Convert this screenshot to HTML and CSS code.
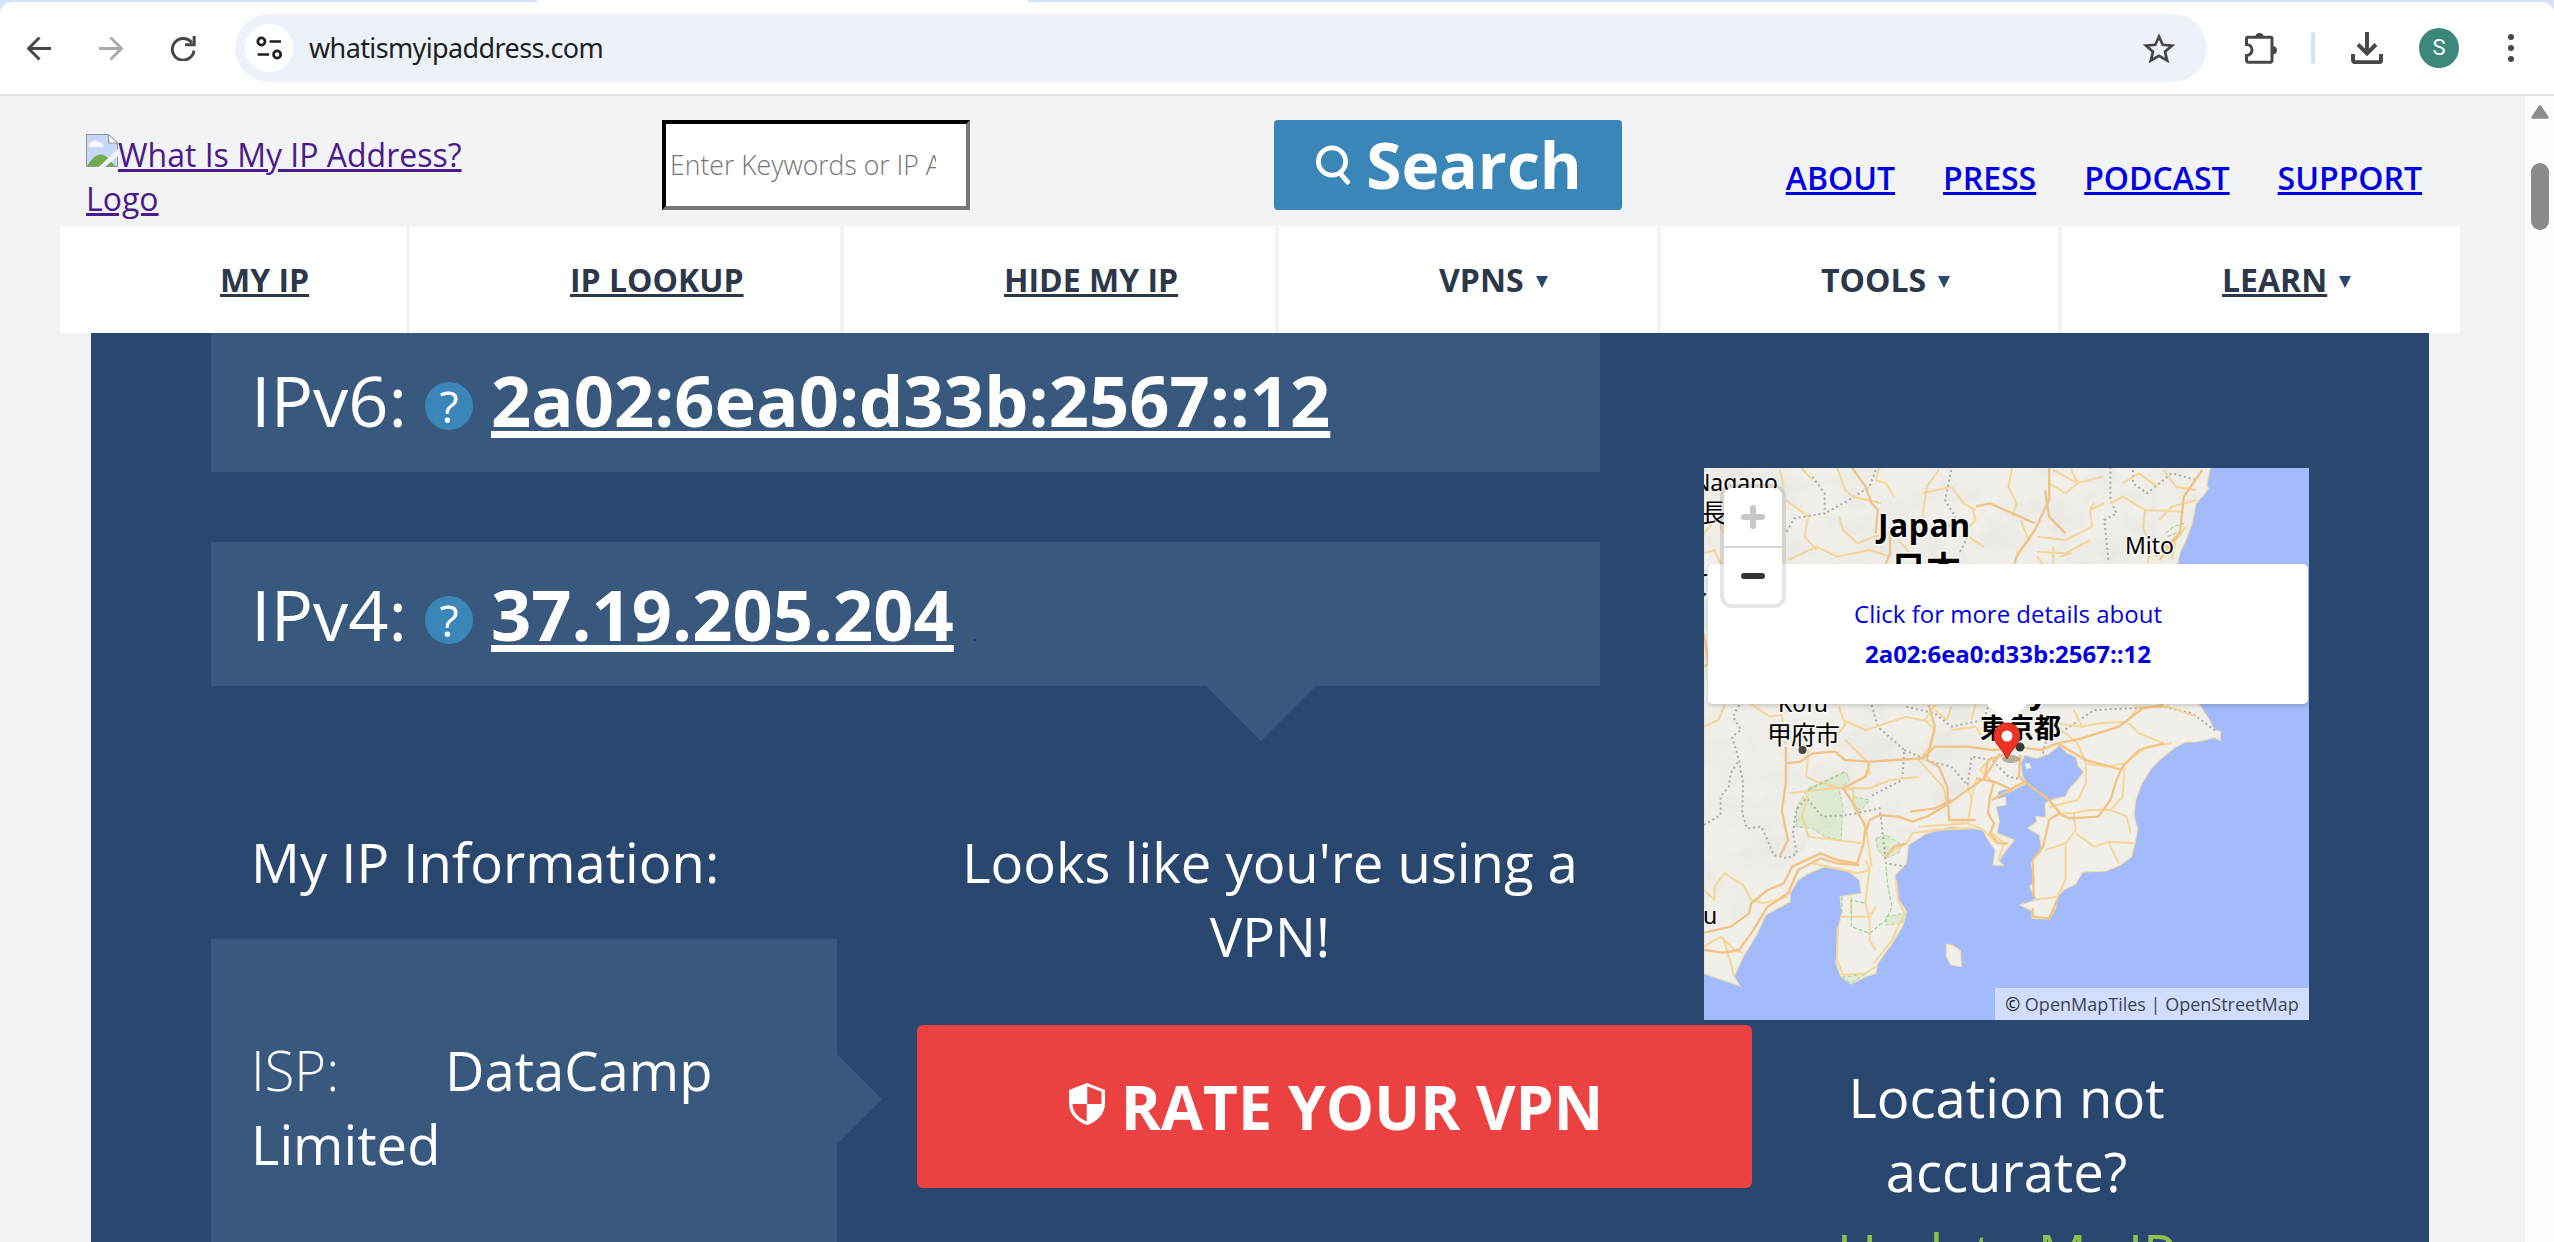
FILE: index.html
```html
<!DOCTYPE html>
<html lang="en">
<head>
<meta charset="utf-8">
<title>What Is My IP Address</title>
<link rel="stylesheet" href="styles.css">
</head>
<body>
<div class="tabstrip">
<div class="toolbar">
  <div class="tab-foot"></div>
  <svg class="ic back" viewBox="0 0 24 24"><path d="M23 12H2M12 1.500 1.500 12 12 22.500" fill="none" stroke="#474747" stroke-width="2.800"/></svg>
  <svg class="ic fwd" viewBox="0 0 24 24"><path d="M1 12h21M12 1.500 22.500 12 12 22.500" fill="none" stroke="#a9a9a9" stroke-width="2.800"/></svg>
  <svg class="ic reload" viewBox="0 0 24 24"><path d="M20.500 6.500A10.400 10.400 0 1 0 22.500 14M22.700 0v8.500H14" fill="none" stroke="#474747" stroke-width="2.900"/></svg>
  <div class="omnibox">
    <div class="site-info"><svg viewBox="0 0 24 24" width="26" height="26"><g fill="none" stroke="#1f1f1f" stroke-width="2.500"><circle cx="5" cy="6" r="3.300"/><circle cx="19.500" cy="18" r="3.300"/><path d="M12.500 6H23M1.500 18H12"/></g></svg></div>
    <span class="url">whatismyipaddress.com</span>
    <svg class="star" viewBox="0 0 32 30"><path d="M16 3.500 19.700 11.800 29 12.600 22 18.700 24.200 27.500 16 22.800 7.800 27.500 10 18.700 3 12.600 12.300 11.800Z" fill="none" stroke="#474747" stroke-width="2.700"/></svg>
  </div>
  <svg class="puzzle" viewBox="0 0 32 32"><path d="M3.500 5.300H25.500a1.500 1.500 0 0 1 1.500 1.500V28.700a1.500 1.500 0 0 1-1.500 1.500H3a1.500 1.500 0 0 1-1.500-1.500V23.500a5.500 5.500 0 0 0 0-11V6.800a1.500 1.500 0 0 1 1.500-1.500Z" fill="none" stroke="#474747" stroke-width="3"/><path d="M10.500 5a4 4 0 0 1 8 0ZM28 14.300a4 4 0 0 1 0 8Z" fill="#474747"/></svg>
  <div class="split"></div>
  <svg class="download" viewBox="0 0 32 32"><path d="M16 0V20M7 12.500l9 9 9-9M2 22v6.500a1.700 1.700 0 0 0 1.700 1.700H28.300a1.700 1.700 0 0 0 1.700-1.700V22" fill="none" stroke="#474747" stroke-width="3.900"/></svg>
  <div class="avatar">S</div>
  <svg class="dots" viewBox="0 0 6 28"><g fill="#474747"><circle cx="3" cy="3" r="3"/><circle cx="3" cy="14" r="3"/><circle cx="3" cy="25" r="3"/></g></svg>
</div>
</div>

<div class="viewport">
<div class="page">
  <header class="header">
    <a class="logo" href="#"><svg class="broken" viewBox="0 0 32 33"><path d="M.5.500H22.500L31.500 9V32.500H.5Z" fill="#c6d8f5" stroke="#8f9394"/><path d="M22.500.500V9h9Z" fill="#fff" stroke="#8f9394"/><path d="M4 13a2.800 2.800 0 0 1 2-5 4 4 0 0 1 7 1 2.500 2.500 0 0 1 3 4Z" fill="#fff"/><path d="M1 32C5 26 10 20 15 20.500S25 27 29 32Z" fill="#6fab4b"/><path d="M32 15V22L19 33H12.500Z" fill="#f1f3f5"/></svg>What Is My IP Address? Logo</a>
    <input class="query" type="text" placeholder="Enter Keywords or IP Address">
    <button class="search"><svg viewBox="0 0 34 40" width="34" height="40"><circle cx="16" cy="16.500" r="13.600" fill="none" stroke="#fff" stroke-width="4.800"/><path d="M24 28 31.500 37" stroke="#fff" stroke-width="5" stroke-linecap="round"/></svg>Search</button>
    <nav class="links"><a href="#">ABOUT</a><a href="#">PRESS</a><a href="#">PODCAST</a><a href="#">SUPPORT</a></nav>
  </header>
  <nav class="menu">
    <div><a href="#">MY IP</a></div>
    <div><a href="#">IP LOOKUP</a></div>
    <div><a href="#">HIDE MY IP</a></div>
    <div><span>VPNS</span><i></i></div>
    <div><span>TOOLS</span><i></i></div>
    <div><a href="#">LEARN</a><i></i></div>
  </nav>
  <main class="main">
    <section class="left">
      <div class="ip v6"><span class="lbl">IPv6:</span><b class="q">?</b><a href="#">2a02:6ea0:d33b:2567::12</a></div>
      <div class="ip v4"><span class="lbl">IPv4:</span><b class="q">?</b><a href="#">37.19.205.204</a><i class="speck"></i></div>
      <div class="row">
        <div class="info">
          <p class="info-title">My IP Information:</p>
          <div class="isp"><span class="key">ISP:</span>DataCamp Limited</div>
        </div>
        <div class="vpn">
          <p>Looks like you're using a VPN!</p>
          <a class="rate"><svg viewBox="0 0 36 42" width="36" height="42"><path d="M18 0 36 7V20C36 31 28 39 18 42 8 39 0 31 0 20V7Z" fill="#fff"/><path d="M18.300 3.300 32.500 8.700V21H18.300ZM17.700 21V38.500C9.500 35 3.800 29 3.500 21Z" fill="#eb4141"/></svg>RATE YOUR VPN</a>
        </div>
      </div>
    </section>
    <section class="right">
      <div class="map">
        <svg class="tiles" viewBox="0 0 605 552" width="605" height="552">
          <defs>
            <filter id="relief" x="0" y="0" width="100%" height="100%"><feTurbulence type="fractalNoise" baseFrequency=".022 .03" numOctaves="3" seed="8"/><feColorMatrix values="0 0 0 0 .55  0 0 0 0 .55  0 0 0 0 .52  .8 0 0 0 -.32"/></filter>
            <clipPath id="inland"><path d="M0 0H500L490 100 300 270 215 385 165 360 120 360 80 400 0 500Z"/></clipPath>
          </defs>
          <rect width="605" height="552" fill="#a3bbfa"/>
          <g transform="translate(-14 232) scale(.408163 .333333)" class="geo">
            <path class="land" d="M34-700H1275L1266-645 1270-635 1255-610 1240-590 1230-530 1215-480 1200-440 1190-380 1195-200 1220-60 1247 12 1270 55 1285 90 1300 95 1299 122 1286 112 1240 126 1215 125 1185 145 1150 180 1130 205 1105 255 1092 300 1088 340 1092 370 1097 385 1090 430 1082 470 1055 495 1020 513 962 516 945 552 915 570 900 590 895 625 880 657 838 655 838 632 808 615 850 600 832 560 845 545 836 490 862 450 856 405 828 385 850 365 848 350 872 352 870 310 890 298 920 290 930 265 950 240 965 215 952 200 945 170 925 160 905 135 878 162 850 175 820 165 810 190 815 230 825 250 800 265 772 280 774 315 750 320 758 365 752 400 795 420 772 455 757 482 768 496 742 495 748 450 728 415 718 390 690 385 640 380 580 400 535 435 530 490 503 525 504 560 512 600 530 635 522 675 495 730 460 790 455 820 430 830 395 852 370 830 358 790 364 680 372 640 368 590 420 580 415 540 385 510 330 500 290 520 265 540 245 580 245 605 185 645 165 700 130 770 108 830 122 858 34 820Z"/>
            <path class="land" d="M628 732 645 737 662 752 665 800 640 795 628 770Z"/>
            <path d="M755 275l20-8 2 20-22 10Z" fill="#a3bbfa"/>
            <path d="M820 190l12 0 4 14-12 4Z" fill="#f0efea"/>
            <path class="park" d="M290 265 380 215 392 240 365 270 375 320 370 420 330 410 300 385 260 380 262 320ZM455 415 480 405 520 435 510 460 480 475 460 450ZM400 290 440 300 420 330 402 320ZM480 650 525 640 520 670 480 675ZM372 832 430 822 395 850Z"/>
            <g class="border">
              <path d="M120 15 105 50 125 90 103 110 120 180 130 250 128 340 140 385 175 380 190 420 205 465 240 475 262 460 252 400 260 330 285 295 325 350 385 345 465 325 472 400 480 490 530 500M34 375 75 345 75 290 95 260 100 220 120 180M445 15 460 80 525 150 520 240 440 290M525 150 590 185 640 200 680 255 690 170 740 180 780 230 820 240M530 20 600 40 640 80 720 60 730 20M865 160 870 130 990 30 1160 20 1230 40 1290 95M300-670 330-620 330-560 255-545 235-500M455-690 440-640 390-600 330-560M640-690 625-600 650-550 625-500M1030-700 1030-600 1045-560 1015-540 1025-420M1085-690 1085-650 1120-620 1180-680 1240-660M680-490 660-440"/>
            </g>
            <g class="minor">
              <path d="M34 80 70 60 85 15M150 12 195 50 225 45 235 135M60 600 60 560 85 520 130 555 150 600 180 610 240 590M34 570 60 600M34 740 75 710 110 750 130 760M80 710 100 790 108 830M245 280 350 265 440 265 490 240 560 230M290 150 285 230 310 245 370 265 400 270 400 320 430 375 445 500M290 280 275 350 290 410 360 420 420 430M380 120 435 185 440 220 375 265M365 20 380 75 350 120M375 60 430 90 530 50 585 65M600 15 575 60 600 90 590 140 560 180 590 220 620 260 630 310M680 255 690 300 680 370 640 370M560 380 680 370 720 390 750 430M640 90 700 80 720 120 780 110M860 70 900 80 950 130 970 190 970 250 950 300 880 320M900 70 960 80 1000 70 1070 65 1100 20M1075 70 1100 100 1160 130M970 190 1020 200 1065 190 1120 140 1180 130M1065 200 1060 290 1030 330 975 330 940 340 905 340M940 340 945 390 920 430 870 450M945 400 990 440 1025 425 1090 430M1025 425 1050 490M920 435 920 540 900 590 840 600M1030 330 1070 350 1080 400M745 250 710 210 740 170M700 240 690 300M740 400 770 430 755 480M430 480 440 510 410 520 300 490M440 500 430 610 440 660 440 720 455 750M370 650 440 650 455 620M395 590 395 640M505 540 510 600 525 640 495 720 450 790M362 680 360 780 375 825 430 820 455 800M480 465 530 430 545 400 600 390 690 385M600 30 630 60 640 20M700 10 690 60M800 20 770 45M940 30 960 80M1090 20 1170 20 1240 50M34-230 20-200M40-640 80-620M220-690 230-640M270-700 300-660M360-700 380-630 400-610 470-590M465-700 455-660 480-650 500-610M610-690 580-640 570-550M570-620 640-640 670-590 700-570M790-700 780-640 800-590 790-550M890-690 950-650 1010-670M930-700 950-650 920-620 880-650M990-590 980-570 1015-590M1030-590 1060-610 1115-570 1210-565M1115-570 1110-520 1130-450 1120-410M1160-690 1190-640 1240-630M1060-650 1100-680 1145-640M980-570 985-520 920-480 850-490M850-445 920-440 980-480M810-540 830-480 800-440M850-430 870-400M890-460 890-410M905-430 935-440M34-500 70-550 80-500M34-440 60-450 78-400M240-420 310-460 360-430 440-450 490-430M365-550 375-510 410-470 450-490 500-500M235-600 290-550 280-490 310-450M500-400 540-440 510-480M690-580 700-540 670-500 720-460M1240-600 1180-580 1150-540M1180-420 1190-480 1215-520"/>
            </g>
            <g class="major">
              <path d="M220 470 240 420 225 330 235 250 235 140M235 190 270 185 300 160 355 155 380 180 440 185 500 180 570 175 600 140 680 140 740 150 800 145M585 15 600 80 580 180 610 200 630 260 635 360 700 360M440 190 430 230 375 265 400 310 430 380 425 430 410 490 360 480 320 460 250 500 230 550 190 570 150 610 145 640 100 680 34 698M34 750 80 758 120 750 150 700 190 620 240 580 265 510 320 475 360 490 415 495M430 400 440 360 465 345 510 350 545 365 580 350 615 325 640 305 720 235 760 160M540 335 600 325 640 300M700 235 745 245 790 270M745 245 735 290 730 340 745 370 735 400 755 430 780 430M740 300 790 265 820 245M810 165 805 230 820 245M820 245 880 300 910 345 930 355 1000 350 1030 300 1045 240 1060 200 1100 150 1160 130M905 340 880 360 865 440 840 480 842 590M800 140 860 150 900 130 970 180 1060 210M1160 15 1110 25 1050 80 960 115 900 130M840 625 840 650 880 655 900 600M480 470 500 440 530 430M720 240 730 180 780 160M395-700 430-640 445-590 460-570 455-500M490-520 490-440 480-410M880-700 880-600 845-510 800-430 795-410M700-580 735-590 790-560 845-530M870-630 880-550 920-500M1255-690 1210-610 1200-500 1150-420M1200-500 1140-430M34-200 45-110 35-100"/>
            </g>
            <path class="trail" d="M480 500 485 560 495 620 480 660 440 700 395 680 395 600 430 610M372 590 372 640M290 270 380 215M1165-500 1185-520 1210-530M1170-490 1200-505"/>
          </g>
          <g clip-path="url(#inland)"><rect width="605" height="552" filter="url(#relief)" opacity=".42"/></g>
          <g class="names">
            <text x="-11" y="23" font-size="23" textLength="85">Nagano</text>
            <text class="cjk" x="-3" y="54" font-size="25">長野</text>
            <text x="174" y="69" font-size="32" font-weight="700" textLength="92">Japan</text>
            <text class="cjk" x="187" y="114" font-size="35" font-weight="700">日本</text>
            <text x="421" y="86" font-size="23" textLength="49">Mito</text>
            <text x="-6" y="119" font-size="23">r</text><text x="-20" y="144" font-size="25">了</text>
            <text x="74" y="244" font-size="23" textLength="50">Kofu</text>
            <text class="cjk" x="63" y="276" font-size="25" textLength="73">甲府市</text>
            <text x="270" y="235" font-size="32" font-weight="700" textLength="93">Tokyo</text>
            <text class="cjk" x="276" y="270" font-size="27" font-weight="700" textLength="81">東京都</text>
            <text x="-1" y="456" font-size="23">u</text>
          </g>
          <circle cx="98.500" cy="282" r="4" fill="#444"/><circle cx="316" cy="279" r="4.500" fill="#3c3c3c"/>
        </svg>
        <div class="popup"><span>Click for more details about</span><strong>2a02:6ea0:d33b:2567::12</strong></div>
        <svg class="pin" viewBox="0 0 36 44"><ellipse cx="20" cy="37" rx="9" ry="4" fill="#8b7a55" opacity=".55"/><path d="M16 1C8 1 3 7 3 14 3 22 11 26 16 37 21 26 29 22 29 14 29 7 24 1 16 1Z" fill="#ea3323" stroke="#c22a1d"/><circle cx="16" cy="14" r="5.500" fill="#fff"/></svg>
        <div class="zoomer"><span><svg viewBox="0 0 24 24" width="24" height="24"><path d="M3 12H21M12 3V21" stroke="#c8c8c8" stroke-width="6" stroke-linecap="round"/></svg></span><span><svg viewBox="0 0 24 24" width="24" height="24"><path d="M3 12H21" stroke="#333" stroke-width="6" stroke-linecap="round"/></svg></span></div>
        <div class="credit"><b>©</b> OpenMapTiles | OpenStreetMap</div>
      </div>
      <p class="loc">Location not<br>accurate?</p>
      <a class="update">Update My IP</a>
    </section>
  </main>
</div>
<div class="scrollbar"><svg viewBox="0 0 18 14" width="18" height="14"><path d="M1.500 12.500 9 1.500 16.500 12.500Z" fill="#8b8b8b" stroke="#8b8b8b" stroke-width="2.500" stroke-linejoin="round"/></svg><div class="thumb"></div></div>
</div>
</body>
</html>
```
FILE: styles.css
```css
*{box-sizing:border-box}
html,body{margin:0;height:1242px;overflow:hidden}
body{font-family:"Open Sans","Noto Sans CJK JP",sans-serif;background:#f1f3f5;color:#fff}
p{margin:0}

/* browser toolbar */
.tabstrip{background:#d3e3fd;height:96px;padding-top:2px}
.toolbar{position:relative;height:94px;background:#fff;border-bottom:2px solid #e1e2e1;border-radius:12px 12px 0 0;display:flex;align-items:center;padding-left:27px}
.tab-foot{position:absolute;left:537px;top:-2px;width:491px;height:2px;background:#fff}
.ic{width:25px;height:25px;flex:none}
.fwd{margin-left:46px}
.reload{margin-left:47px;width:26px}
.omnibox{margin-left:39px;width:1972px;height:68px;border-radius:34px;background:#edf2fa;display:flex;align-items:center;padding:0 32px 0 10px;flex:none}
.site-info{width:48px;height:48px;border-radius:50%;background:#fff;display:grid;place-items:center}
.url{margin-left:16px;color:#1f1f1f;font:400 27px/40px "Noto Sans",sans-serif;flex:1;letter-spacing:-.62px}
.star{width:32px;height:30px}
.puzzle{width:32px;height:32px;margin-left:38px}
.split{width:4px;height:32px;border-radius:2px;background:#d3e3fd;margin-left:34px}
.download{width:32px;height:32px;margin-left:36px}
.avatar{width:40px;height:40px;border-radius:50%;background:#3b877a;margin-left:36px;text-align:center;font:400 22px/40px Roboto,sans-serif}
.dots{width:6px;height:28px;margin-left:49px}

/* page frame */
.viewport{display:flex;height:1146px}
.page{width:2525px;height:1146px;overflow:hidden}
.scrollbar{width:29px;background:#fcfcfc;display:flex;flex-direction:column;align-items:center;padding-top:9px;padding-left:1px}
.thumb{width:18px;height:67px;border-radius:9px;background:#8b8b8b;margin-top:44px}

/* header */
.header{height:130px;display:flex;align-items:flex-start;padding:24px 103px 0 86px}
.logo{width:420px;color:#4b1a8b;font-size:32px;line-height:43.500px;margin-top:13px;text-decoration-thickness:3px}
.broken{width:32px;height:33px;vertical-align:baseline}
.query{margin-left:156px;width:308px;height:90px;border:4px inset #767676;border-color:#212121 #767676 #767676 #212121;border-radius:0;padding:2px 30px 2px 4px;font:300 26.600px "Open Sans",sans-serif;background:#fff}
.query::placeholder{color:#757575;opacity:1}
.search{margin-left:304px;width:348px;height:90px;border:0;border-radius:4px;background:#3a86b8;color:#fff;font:700 64px/90px "Open Sans",sans-serif;padding:0 0 0 2px;display:flex;align-items:center;justify-content:center;gap:16px}
.links{margin-left:auto;padding-top:35px;display:flex;gap:48px;font-size:32px;line-height:46px;font-weight:600}
.links a{color:#0000e6;text-decoration-thickness:3px}

/* menu */
.menu{display:grid;grid-template-columns:350px 434px 435px 382px 401px 398px;height:107px;margin-left:60px;width:2400px;background:#fff;font-size:32px;font-weight:700;line-height:107px;color:#2c384a}
.menu div{padding-left:160px;border-right:4px solid #f1f3f5;display:flex;align-items:center}
.menu div:last-child{border:0}
.menu a{color:inherit;text-decoration-thickness:3px}
.menu i{margin-left:12px;margin-top:5px;border:6px solid transparent;border-top:12px solid #29476f;border-bottom:0}

/* main */
.main{display:flex;background:#29476f;margin-left:91px;width:2338px;height:909px;padding-left:120px}
.left{width:1389px;flex:none}
.ip{background:#38587d;display:flex;padding-left:40px;font-size:70.400px;position:relative}
.v6{height:139px;line-height:134px}
.v4{height:144px;line-height:144px;margin-top:70px}
.v4::after{content:"";position:absolute;left:995px;top:100%;border:55px solid transparent;border-top-color:#38587d;border-bottom:0}
.ip .lbl{width:174px;font-weight:400;white-space:nowrap}
.q{width:48px;height:48px;border-radius:50%;background:#3a86b8;font-size:44px;font-weight:400;line-height:49px;text-align:center;margin-top:49px}
.v4 .q{margin-top:54px}
.ip a{margin-left:18px;color:#fff;font-weight:700;text-decoration-thickness:7px}
.speck{width:2px;height:2px;background:#2626c8;margin:97px 0 0 20px}
.row{display:flex;gap:80px;margin-top:139px;font-size:54.400px;line-height:74px}
.info{width:626px;flex:none}
.info-title{padding-left:40px;height:114px}
.isp{position:relative;height:303px;background:#38587d;padding:94px 120px 0 40px}
.isp::after{content:"";position:absolute;left:100%;top:115px;border:45px solid transparent;border-left-color:#38587d;border-right:0}
.key{display:inline-block;width:194px;font-weight:300}
.vpn{width:706px;flex:none;text-align:center}
.rate{width:835px;height:163px;margin-top:52px;border-radius:6px;background:#eb4141;display:flex;justify-content:center;align-items:center;gap:16px;padding-left:3px;font-size:60.800px;font-weight:700;line-height:163px;white-space:nowrap}
.rate svg{margin-top:-6px}
.right{width:605px;margin-left:104px;padding-top:135px;text-align:center;font-size:54.400px;line-height:74px}
.loc{margin-top:40px}
.update{display:block;color:#8fc050;margin-top:8px}

/* map */
.map{position:relative;height:552px;overflow:hidden;line-height:1.36}
.tiles{display:block}
.geo path{vector-effect:non-scaling-stroke;stroke-linejoin:round}
.land{fill:#f0efea;stroke:#f3dfae;stroke-width:1.2}
.park{fill:#deead1;stroke:#a4d898;stroke-width:1;stroke-dasharray:4 2}
.border{fill:none;stroke:#a9a9a9;stroke-width:2;stroke-dasharray:2 3}
.minor{fill:none;stroke:#f6d798;stroke-width:2}
.major{fill:none;stroke:#f3c384;stroke-width:2.3}
.trail{fill:none;stroke:#9bd692;stroke-width:1.2;stroke-dasharray:4 2}
.names{fill:#000;stroke:#f7f6f2;stroke-width:3;paint-order:stroke;font-family:"Noto Sans","Noto Sans CJK JP",sans-serif}
.cjk{font-family:"Noto Sans CJK JP",sans-serif}
.popup{position:absolute;left:4px;top:96px;width:600px;height:140px;border-radius:5px;background:#fff;box-shadow:0 2px 4px rgba(0,0,0,.16);color:#0000e6;font-size:24px;line-height:40px;padding-top:30px;display:flex;flex-direction:column;align-items:center}
.popup::after{content:"";position:absolute;left:279px;top:100%;border:20px solid transparent;border-top-color:#fff;border-bottom:0}
.pin{position:absolute;left:287px;top:254px;width:36px;height:44px}
.zoomer{position:absolute;left:16px;top:16px;width:66px;height:124px;border:4px solid rgba(0,0,0,.1);border-radius:12px;background:#fff;background-clip:padding-box;display:grid;grid-template-rows:60px 56px}
.zoomer span{display:grid;place-items:center}
.zoomer span:first-child{border-bottom:2px solid #d5d5d5}
.credit{position:absolute;right:0;bottom:0;width:314px;height:32px;background:rgba(255,255,255,.5);color:#3f4550;font-size:18px;line-height:32px;text-align:center;white-space:nowrap}
.credit b{font-weight:400;color:#111}
```
